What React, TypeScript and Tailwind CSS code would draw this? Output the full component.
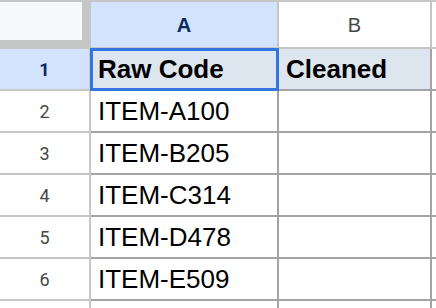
import React from "react";

const rows = ["ITEM-A100", "ITEM-B205", "ITEM-C314", "ITEM-D478", "ITEM-E509"];

const App = () => {
  return (
    <div className="w-[436px] h-[308px] overflow-hidden bg-white font-['Liberation_Sans',Arial,sans-serif]">
      <div className="grid grid-cols-[91px_188px_153px_1fr]">
        {/* header row */}
        <div className="h-[49px] bg-[#c4c7c5] pt-[2px] pb-[9px] pr-[9px]">
          <div className="h-full bg-[#f8f9fa]" />
        </div>
        <div className="h-[49px] border-t-2 border-r-2 border-b-2 border-[#c4c7c5] bg-[#d3e3fd] flex items-center justify-center text-[20px] font-bold text-[#0b2a5c]">
          A
        </div>
        <div className="h-[49px] border-t-2 border-r-2 border-b-2 border-[#c4c7c5] bg-white flex items-center justify-center text-[20px] text-[#444746]">
          B
        </div>
        <div className="h-[49px] border-t-2 border-b-2 border-[#c4c7c5] bg-white" />

        {/* row 1 */}
        <div className="h-[42px] border-r-2 border-b-2 border-[#c4c7c5] bg-[#d3e3fd] flex items-center justify-center text-[18px] font-bold text-[#0b2a5c] font-['Roboto',sans-serif]">
          1
        </div>
        <div className="relative h-[42px] border-r-2 border-b-2 border-[#a3a3a3] bg-[#dde5ef] flex items-center pl-[7px] text-[26px] font-bold text-black">
          Raw Code
          <div className="absolute -top-[1px] -left-[1px] -right-[2px] -bottom-[2px] border-[3px] border-[#3574e3]" />
        </div>
        <div className="h-[42px] border-r-2 border-b-2 border-[#a3a3a3] bg-[#dde5ef] flex items-center pl-[7px] text-[26px] font-bold text-black">
          Cleaned
        </div>
        <div className="h-[42px] border-b-2 border-[#a3a3a3] bg-white" />

        {rows.map((code, i) => (
          <React.Fragment key={code}>
            <div className="h-[42px] border-r-2 border-b-2 border-[#c4c7c5] bg-white flex items-center justify-center text-[18px] text-[#444746] font-['Roboto',sans-serif]">
              {i + 2}
            </div>
            <div className="h-[42px] border-r-2 border-b-2 border-[#a3a3a3] bg-white flex items-center pl-[7px] text-[26px] text-black">
              {code}
            </div>
            <div className="h-[42px] border-r-2 border-b-2 border-[#a3a3a3] bg-white" />
            <div className="h-[42px] border-b-2 border-[#a3a3a3] bg-white" />
          </React.Fragment>
        ))}

        {/* row 7 (cut off) */}
        <div className="h-[42px] border-r-2 border-[#c4c7c5] bg-white" />
        <div className="h-[42px] border-r-2 border-[#a3a3a3] bg-white" />
        <div className="h-[42px] border-r-2 border-[#a3a3a3] bg-white" />
        <div className="h-[42px] bg-white" />
      </div>
    </div>
  );
};

export default App;
